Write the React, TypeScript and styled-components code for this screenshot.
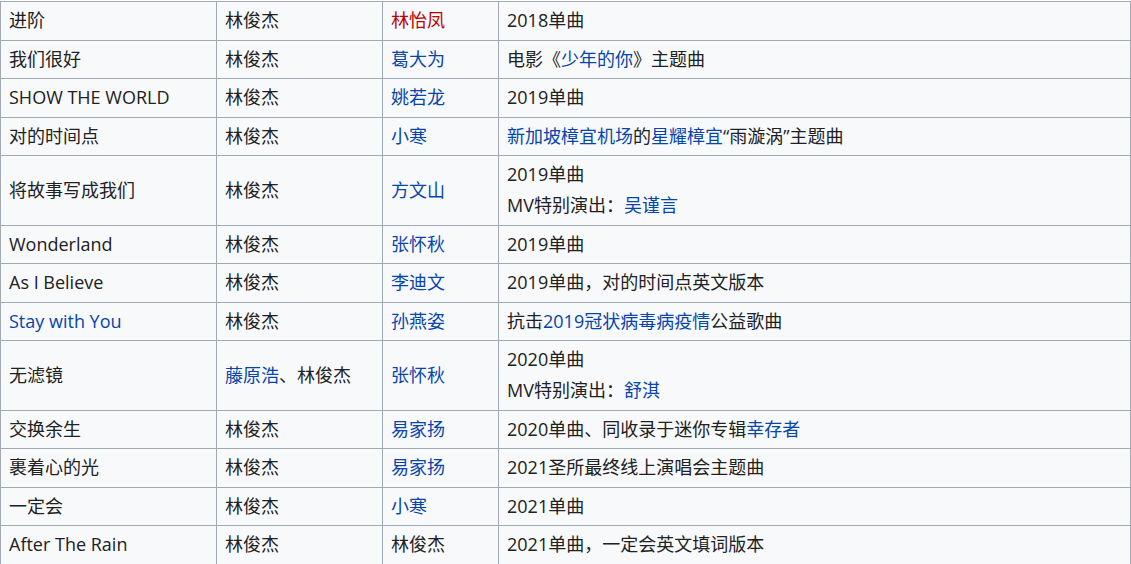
import React from "react";
import styled, { createGlobalStyle } from "styled-components";

const Global = createGlobalStyle`
  body { margin: 0; background: #fff; }
`;

const Table = styled.table`
  border-collapse: collapse;
  table-layout: fixed;
  width: 1131px;
  background: #f8f9fa;
  color: #202122;
  font-family: "Open Sans", "Noto Sans CJK SC", sans-serif;
  font-size: 18px;
  margin-top: 1px;
`;

const Col = styled.col<{ $w?: number }>`
  width: ${(p) => (p.$w ? `${p.$w}px` : "auto")};
`;

const Cell = styled.td`
  border: 1px solid #a2a9b1;
  padding: 3px 8px 3.5px;
  line-height: 31px;
  vertical-align: middle;
  white-space: nowrap;
`;

const A = styled.a<{ $red?: boolean }>`
  color: ${(p) => (p.$red ? "#ba0000" : "#0645ad")};
  text-decoration: none;
`;

type R = [React.ReactNode, React.ReactNode, React.ReactNode, React.ReactNode];
const L = ({ c }: { c: string }) => <A href="#">{c}</A>;
const J = "林俊杰";

const rows: R[] = [
  ["进阶", J, <A $red href="#">林怡凤</A>, "2018单曲"],
  ["我们很好", J, <L c="葛大为" />, <>电影《<L c="少年的你" />》主题曲</>],
  ["SHOW THE WORLD", J, <L c="姚若龙" />, "2019单曲"],
  ["对的时间点", J, <L c="小寒" />, <><L c="新加坡樟宜机场" />的<L c="星耀樟宜" />“雨漩涡”主题曲</>],
  ["将故事写成我们", J, <L c="方文山" />, <>2019单曲<br />MV特别演出：<L c="吴谨言" /></>],
  ["Wonderland", J, <L c="张怀秋" />, "2019单曲"],
  ["As I Believe", J, <L c="李迪文" />, "2019单曲，对的时间点英文版本"],
  [<L c="Stay with You" />, J, <L c="孙燕姿" />, <>抗击<L c="2019冠状病毒病疫情" />公益歌曲</>],
  ["无滤镜", <><L c="藤原浩" />、林俊杰</>, <L c="张怀秋" />, <>2020单曲<br />MV特别演出：<L c="舒淇" /></>],
  ["交换余生", J, <L c="易家扬" />, <>2020单曲、同收录于迷你专辑<L c="幸存者" /></>],
  ["裹着心的光", J, <L c="易家扬" />, "2021圣所最终线上演唱会主题曲"],
  ["一定会", J, <L c="小寒" />, "2021单曲"],
  ["After The Rain", J, J, "2021单曲，一定会英文填词版本"],
];

export default function App() {
  return (
    <>
      <Global />
      <Table>
        <colgroup>
          <Col $w={216} />
          <Col $w={166} />
          <Col $w={116} />
          <Col />
        </colgroup>
        <tbody>
          {rows.map((r, i) => (
            <tr key={i}>
              {r.map((c, j) => (
                <Cell key={j}>{c}</Cell>
              ))}
            </tr>
          ))}
        </tbody>
      </Table>
    </>
  );
}
